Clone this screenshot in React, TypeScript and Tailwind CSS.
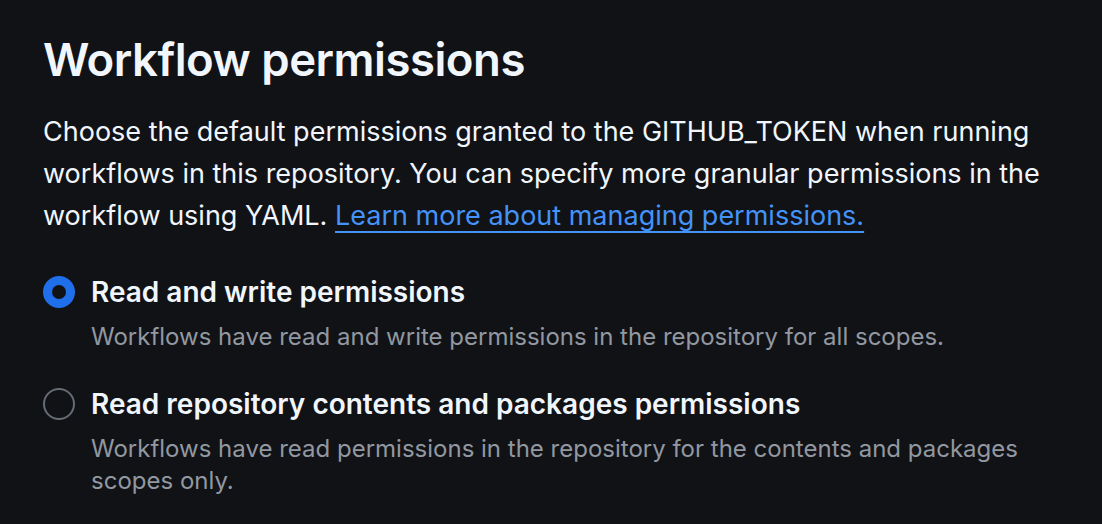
import React from "react";

type Option = {
  id: string;
  label: string;
  note: string;
  checked: boolean;
};

const OPTIONS: Option[] = [
  {
    id: "write",
    label: "Read and write permissions",
    note: "Workflows have read and write permissions in the repository for all scopes.",
    checked: true,
  },
  {
    id: "read",
    label: "Read repository contents and packages permissions",
    note: "Workflows have read permissions in the repository for the contents and packages scopes only.",
    checked: false,
  },
];

function Radio({ checked }: { checked: boolean }) {
  if (checked) {
    return (
      <span className="mt-[5px] block h-[32px] w-[32px] shrink-0 rounded-full border-[9px] border-[#1f6feb] bg-[#111216]" />
    );
  }
  return (
    <span className="mt-[5px] block h-[32px] w-[32px] shrink-0 rounded-full border-2 border-[#656c76] bg-transparent" />
  );
}

export default function App() {
  return (
    <div className="min-h-screen bg-[#111216] px-[43px] pt-[30px] text-[#f0f6fc] font-['Inter',sans-serif]">
      <h2 className="text-[45.5px] leading-[60px] font-semibold tracking-[-0.5px]">
        Workflow permissions
      </h2>

      <p className="mt-[21px] text-[27px] leading-[42px] text-[#f0f6fc]">
        Choose the default permissions granted to the GITHUB_TOKEN when running
        workflows in this repository. You can specify more granular permissions in the
        workflow using YAML.{" "}
        <a href="#" className="text-[#4493f8] underline underline-offset-[6px] decoration-2">
          Learn more about managing permissions.
        </a>
      </p>

      <div className="mt-[34px] flex flex-col gap-[30px]">
        {OPTIONS.map((opt) => (
          <label key={opt.id} className="flex gap-[16px] cursor-pointer">
            <Radio checked={opt.checked} />
            <div>
              <div className="text-[28px] leading-[42px] font-semibold text-[#f0f6fc]">
                {opt.label}
              </div>
              <div className="mt-[8px] text-[24px] leading-[32px] text-[#9198a1]">
                {opt.note}
              </div>
            </div>
          </label>
        ))}
      </div>
    </div>
  );
}
